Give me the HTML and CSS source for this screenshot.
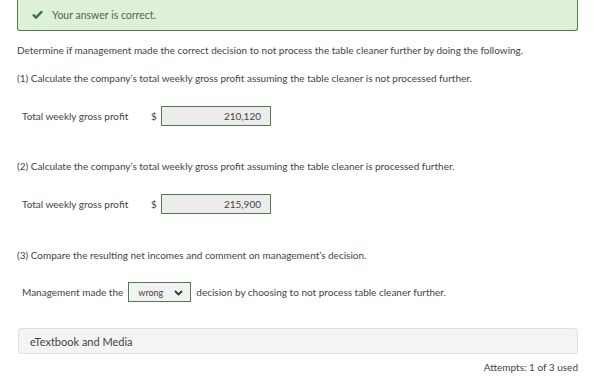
FILE: index.html
```html
<!DOCTYPE html>
<html lang="en">

<head>
    <meta charset="UTF-8">
    <title>Question</title>
    <link rel="stylesheet" href="styles.css">
</head>

<body>
    <div class="notice">
        <svg class="check" width="11" height="9" viewBox="0 0 11 9">
            <path d="M1 4.6 L4.1 7.6 L10 1.4" fill="none" stroke="#3c763d" stroke-width="2.4" />
        </svg>
        <span>Your answer is correct.</span>
    </div>

    <p class="intro">Determine if management made the correct decision to not process the table cleaner further by doing the following.</p>

    <p class="part">(1) Calculate the company’s total weekly gross profit assuming the table cleaner is not processed further.</p>
    <div class="row">
        <span class="label">Total weekly gross profit</span>
        <span class="cur">$</span>
        <div class="answer">210,120</div>
    </div>

    <p class="part p2">(2) Calculate the company’s total weekly gross profit assuming the table cleaner is processed further.</p>
    <div class="row r2">
        <span class="label">Total weekly gross profit</span>
        <span class="cur">$</span>
        <div class="answer">215,900</div>
    </div>

    <p class="part p3">(3) Compare the resulting net incomes and comment on management’s decision.</p>
    <div class="row sel-row">
        <span>Management made the</span>
        <div class="select">
            <span>wrong</span>
            <svg width="9" height="6" viewBox="0 0 9 6">
                <path d="M1 1 L4.5 4.5 L8 1" fill="none" stroke="#333" stroke-width="1.8" />
            </svg>
        </div>
        <span>decision by choosing to not process table cleaner further.</span>
    </div>

    <div class="media">eTextbook and Media</div>
    <div class="attempts">Attempts: 1 of 3 used</div>
</body>

</html>
```
FILE: styles.css
```css
body {
    font-family: Lato, "Open Sans", sans-serif;
    margin: 0;
    padding: 0 16px 0 17px;
    color: #444;
    font-size: 10px;
    background: #fff;
}

.notice {
    height: 31px;
    box-sizing: border-box;
    background: #dff0d8;
    border: 1px solid #4f7c4a;
    border-top: none;
    border-radius: 0 0 3px 3px;
    display: flex;
    align-items: center;
    padding: 0 0 1px 14px;
    color: #55654f;
    font-size: 10.5px;
}

.check {
    margin-right: 9px;
}

p {
    margin: 0;
}

.intro {
    margin-top: 13px;
    line-height: 12px;
}

.part {
    margin-top: 16px;
    line-height: 12px;
}

.p2 {
    margin-top: 34px;
}

.p3 {
    margin-top: 35px;
}

.row {
    display: flex;
    align-items: center;
    margin-top: 22px;
    padding-left: 5px;
}

.r2 {
    margin-top: 22px;
}

.label {
    width: 129px;
}

.cur {
    width: 10px;
}

.answer {
    width: 110px;
    height: 20px;
    box-sizing: border-box;
    border: 1px solid #4f7c4a;
    background: #ececec;
    text-align: right;
    padding-right: 9px;
    line-height: 18px;
}

.sel-row {
    margin-top: 21px;
}

.select {
    margin: 0 5px;
    width: 63px;
    height: 20px;
    box-sizing: border-box;
    border: 1px solid #4f7c4a;
    background: #f2f2f2;
    display: flex;
    align-items: center;
    justify-content: space-between;
    padding: 1px 7px 0 9px;
    font-size: 9px;
}

.media {
    margin: 26px 0 0 1px;
    height: 26px;
    box-sizing: border-box;
    border: 1px solid #e0e0e0;
    border-radius: 3px;
    background: #f4f4f4;
    display: flex;
    align-items: center;
    padding-left: 11px;
    font-size: 11px;
}

.attempts {
    text-align: right;
    margin-top: 7px;
    line-height: 12px;
    font-size: 10px;
}
```
